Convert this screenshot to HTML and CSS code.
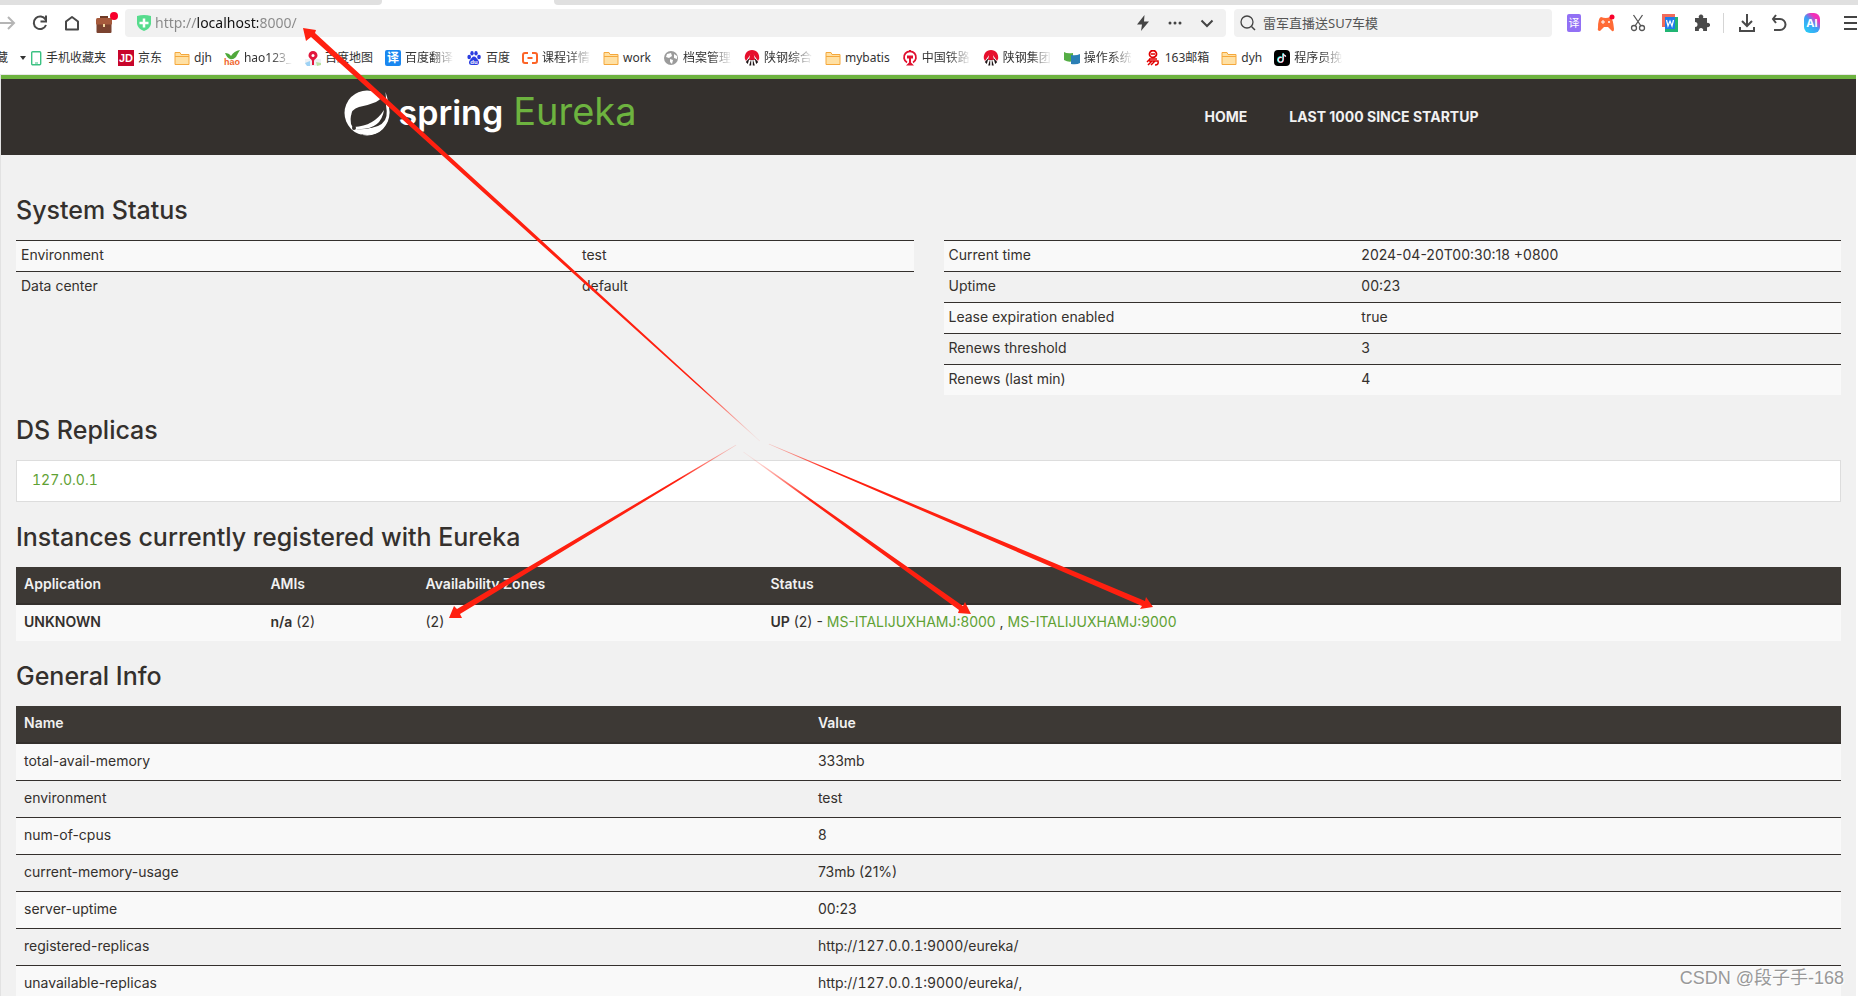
FILE: index.html
```html
<!DOCTYPE html>
<html lang="en">
<head>
<meta charset="utf-8">
<title>Eureka</title>
<link rel="stylesheet" href="styles.css">
</head>
<body>
<svg class="defs" aria-hidden="true">
  <symbol id="folder" viewBox="0 0 16 16"><path d="M1 2.500h5l1 2h8v10H1z" fill="#ffe0a3" stroke="#f5a83c"/><path d="M1 6.500h14" stroke="#f5a83c" fill="none"/></symbol>
  <symbol id="steel" viewBox="0 0 16 16"><path d="M8 0C3 0 .5 4 .8 8.500L2 11l4.500-6.500h3L14 11l1.200-2.500C15.500 4 13 0 8 0z" fill="#e60f2d"/><path d="M6.500 3h3l1.500 7H5z" fill="#e60f2d"/><path d="M5.500 8L1.800 12l2 2zM7.200 9l-2 6.500h2zM8.800 9l2 6.500h-2zM10.500 8l3.700 4-2 2z" fill="#1c1315"/></symbol>
</svg>
<div class="window">
  <div class="tabs"><div class="tab-left"></div><div class="tab-active"></div><div class="tab-right"></div></div>
  <div class="toolbar">
    <button class="tool forward" aria-label="Forward"><svg width="16" height="20" viewBox="0 0 16 20"><path d="M0 10h14M8 4l6 6-6 6" fill="none" stroke="#b5b5b5" stroke-width="2"/></svg></button>
    <button class="tool" aria-label="Reload"><svg width="16" height="16" viewBox="0 0 16 16"><path d="M13.500 4.500A6.300 6.300 0 1 0 14 10" fill="none" stroke="#484848" stroke-width="2"/><path d="M14 0.500v6H8.500" fill="none" stroke="#484848" stroke-width="2"/></svg></button>
    <button class="tool" aria-label="Home"><svg width="16" height="16" viewBox="0 0 16 16"><path d="M2 6.500L8 2l6 4.500V14.500H2z" fill="none" stroke="#484848" stroke-width="2" stroke-linejoin="round"/></svg></button>
    <button class="tool" aria-label="Briefcase"><svg width="22" height="22" viewBox="0 0 22 22"><path d="M5 7V5h6v2" fill="none" stroke="#6e3a26" stroke-width="2"/><rect x="0" y="6" width="16" height="7" rx="1.500" fill="#a65a3c"/><path d="M.5 12.500h15V20a1 1 0 0 1-1 1h-13a1 1 0 0 1-1-1z" fill="#7b4330"/><rect x="7" y="12" width="2" height="3" fill="#f3d9a0"/><circle cx="18" cy="4" r="4" fill="#f8002c"/></svg></button>
    <div class="address">
      <svg width="14" height="16" viewBox="0 0 14 16"><path d="M0 1q7-2 14 0v8q-1 5-7 7-6-2-7-7z" fill="#57dc8d"/><path d="M7 3.500v9M2.500 8h9" stroke="#fff" stroke-width="2.500"/></svg>
      <input class="url" aria-label="Address" value="http://localhost:8000/">
      <button class="tool" aria-label="Speed"><svg width="14" height="16" viewBox="0 0 14 16"><path d="M8.500 0L1 9.500h5L5 16l8-9.500H8z" fill="#444"/></svg></button>
      <button class="tool" aria-label="More"><svg width="14" height="16" viewBox="0 0 14 16"><g fill="#444"><circle cx="2" cy="8" r="1.500"/><circle cx="7" cy="8" r="1.500"/><circle cx="12" cy="8" r="1.500"/></g></svg></button>
      <button class="tool" aria-label="Expand"><svg width="14" height="16" viewBox="0 0 14 16"><path d="M1.500 5.500L7 11l5.500-5.500" fill="none" stroke="#444" stroke-width="2"/></svg></button>
    </div>
    <div class="search">
      <svg width="16" height="16" viewBox="0 0 16 16"><circle cx="7" cy="7" r="6" fill="none" stroke="#444" stroke-width="1.300"/><path d="M11.500 11.500l3.500 3.500" stroke="#444" stroke-width="1.500"/></svg>
      <input class="query" aria-label="Search" value="雷军直播送SU7车模">
    </div>
    <div class="extensions">
      <button class="tool ext" aria-label="Translate"><svg width="16" height="18" viewBox="0 0 16 18"><rect x="1" width="14" height="18" rx="2" fill="#9270f5"/><text x="8" y="13" class="glyph" font-size="11" text-anchor="middle" fill="#fff">译</text></svg></button>
      <button class="tool ext" aria-label="Games"><svg width="18" height="18" viewBox="0 0 18 18"><path d="M4 3q5 2 9 0 3 1 4 12 0 3-2 2l-4-4H7l-4 4q-3 0-2-3Q1 4 4 3z" fill="#ff6b36"/><path d="M4 8h4M6 6v4" stroke="#fff"/><circle cx="12" cy="8" r="1" fill="#fff"/><circle cx="15" cy="3" r="2.500" fill="#f8002c"/></svg></button>
      <button class="tool ext" aria-label="Screenshot"><svg width="16" height="18" viewBox="0 0 16 18"><g fill="none" stroke="#555" stroke-width="1.300"><path d="M3.500 1L11 12M12.500 1L5 12"/><circle cx="4" cy="14" r="2.500"/><circle cx="12" cy="14" r="2.500"/></g></svg></button>
      <button class="tool ext" aria-label="Documents"><svg width="18" height="20" viewBox="0 0 18 20"><path d="M1 1h13v13H1z" fill="#f26b5b"/><path d="M4 4h13v15H4z" fill="#21b573"/><path d="M4 4h10v12H4z" fill="#1f7bea"/><path d="M5.500 7l1.500 6 2-5 2 5 1.500-6" fill="none" stroke="#fff" stroke-width="1.200"/></svg></button>
      <button class="tool ext" aria-label="Extensions"><svg width="16" height="18" viewBox="0 0 16 18"><path d="M1 4h4a2.300 2.300 0 1 1 4 0h4v5a2.200 2.200 0 1 1 0 4v4H9a2.200 2.200 0 1 0-4 0H1v-4a2.200 2.200 0 1 0 0-5z" fill="#4a4a4a"/></svg></button>
      <span class="rule"></span>
      <button class="tool ext" aria-label="Downloads"><svg width="16" height="18" viewBox="0 0 16 18"><path d="M8 0v12M3 7l5 5 5-5M1 13v4h14v-4" fill="none" stroke="#4a4a4a" stroke-width="2"/></svg></button>
      <button class="tool ext" aria-label="Undo"><svg width="16" height="18" viewBox="0 0 16 18"><path d="M5 1L2 5l3 4M2 5h7a5.500 5.500 0 0 1 0 11H3" fill="none" stroke="#4a4a4a" stroke-width="2"/></svg></button>
      <button class="tool ai" aria-label="AI">AI</button>
      <button class="tool" aria-label="Menu"><svg width="13" height="16" viewBox="0 0 13 16"><path d="M0 2h13M0 8h13M0 14h13" stroke="#444" stroke-width="2"/></svg></button>
    </div>
  </div>
  <nav class="bookmarks" aria-label="Bookmarks">
    <a class="mark first" href="#">藏</a>
    <button class="tool" aria-label="Bookmark list"><svg width="6" height="4" viewBox="0 0 6 4"><path d="M0 0h6L3 4z" fill="#333"/></svg></button>
    <a class="mark phone" href="#"><svg width="11" height="16" viewBox="0 0 11 16"><rect x="0.700" y="1.700" width="9" height="13" rx="1" fill="#fff" stroke="#3cc283" stroke-width="1.400"/><path d="M4 13h3" stroke="#3cc283"/></svg><span>手机收藏夹</span></a>
    <a class="mark" href="#"><svg width="16" height="16" viewBox="0 0 16 16"><path d="M0 0h16v16H0z" fill="#c8052b"/><text x="8" y="12" class="glyph" font-size="11" font-weight="700" text-anchor="middle" fill="#fff">JD</text></svg><span>京东</span></a>
    <a class="mark" href="#"><svg width="16" height="16"><use href="#folder"/></svg><span>djh</span></a>
    <a class="mark" href="#"><svg width="16" height="16" viewBox="0 0 16 16"><path d="M1 3q4 0 6 3 3-5 9-6-2 3-4 7-3 3-6 2Q3 8 1 3z" fill="#4fa83a"/><text x="8" y="15" class="glyph" font-size="9" font-weight="700" text-anchor="middle" fill="#f0642c">hao</text></svg><span class="fade">hao123_</span></a>
    <a class="mark" href="#"><svg width="16" height="16" viewBox="0 0 16 16"><path d="M0 9h16v5l-5 2H3l-3-2z" fill="#eef2f5"/><path d="M0 13l5-2v5H2z" fill="#9ed2f5"/><path d="M11 12l5 1v2l-4 1z" fill="#b8e3a3"/><path d="M8 1a4.500 4.500 0 0 0-4.500 4.500C3.500 8 7 9.500 7 11v4h2v-4c0-1.500 3.500-3 3.500-5.500A4.500 4.500 0 0 0 8 1z" fill="#e2163c"/><circle cx="8" cy="5.500" r="1.500" fill="#fff"/></svg><span>百度地图</span></a>
    <a class="mark" href="#"><svg width="16" height="16" viewBox="0 0 16 16"><rect width="16" height="16" rx="2" fill="#1a87f0"/><text x="8" y="12" class="glyph" font-size="12" font-weight="700" text-anchor="middle" fill="#fff">译</text></svg><span class="fade">百度翻译</span></a>
    <a class="mark" href="#"><svg width="16" height="16" viewBox="0 0 16 16"><g fill="#2b3de0"><ellipse cx="3.200" cy="7" rx="1.800" ry="2.200"/><ellipse cx="6" cy="3.200" rx="1.700" ry="2.300"/><ellipse cx="10" cy="3.200" rx="1.700" ry="2.300"/><ellipse cx="13" cy="7" rx="1.800" ry="2.200"/><path d="M8 6.500c-2 0-2.500 2-4 3.500s-1.500 5 1.500 5h5c3 0 3-3.500 1.500-5S10 6.500 8 6.500z"/></g><text x="8" y="14" class="glyph" font-size="6" font-weight="700" text-anchor="middle" fill="#fff">du</text></svg><span>百度</span></a>
    <a class="mark" href="#"><svg width="16" height="16" viewBox="0 0 16 16"><path d="M6 3H3a2 2 0 0 0-2 2v6a2 2 0 0 0 2 2h3M10 3h3a2 2 0 0 1 2 2v6a2 2 0 0 1-2 2h-3M5.500 8h5" fill="none" stroke="#fc6427" stroke-width="2"/></svg><span class="fade">课程详情</span></a>
    <a class="mark" href="#"><svg width="16" height="16"><use href="#folder"/></svg><span>work</span></a>
    <a class="mark" href="#"><svg width="16" height="16" viewBox="0 0 16 16"><circle cx="8" cy="8" r="7" fill="#9b9b9b"/><path d="M4 4l4-1 1 3-3 2-3-1zM7 9l3 1-1 4-2-2zM11 4l3 2v3l-3-1z" fill="#fff"/></svg><span class="fade">档案管理</span></a>
    <a class="mark" href="#"><svg width="16" height="16"><use href="#steel"/></svg><span class="fade">陕钢综合</span></a>
    <a class="mark" href="#"><svg width="16" height="16"><use href="#folder"/></svg><span>mybatis</span></a>
    <a class="mark" href="#"><svg width="16" height="16" viewBox="0 0 16 16"><path d="M5 12.500a6 6 0 1 1 6 0" fill="none" stroke="#e0102f" stroke-width="1.800"/><path d="M5 5.500h6v3H9v4l3 3H4l3-3v-4H5zM7 0h2v2H7z" fill="#e0102f"/></svg><span class="fade">中国铁路</span></a>
    <a class="mark" href="#"><svg width="16" height="16"><use href="#steel"/></svg><span class="fade">陕钢集团</span></a>
    <a class="mark" href="#"><svg width="16" height="16" viewBox="0 0 16 16"><path d="M0 2q3 2 9 1v8q-4 2-9-1z" fill="#55ad45"/><path d="M7 5q5 1 9-1v9q-3 2-9 1z" fill="#2b7fb5"/></svg><span class="fade">操作系统</span></a>
    <a class="mark" href="#"><svg width="16" height="16" viewBox="0 0 16 16"><circle cx="8" cy="4" r="3.500" fill="none" stroke="#e10000" stroke-width="1.800"/><path d="M6 4h4M4 9h8M5 9l-3 3M4 11h9q1 4-3 4M7 11l-4 4M10 11l-4 4" fill="none" stroke="#e10000" stroke-width="1.500"/></svg><span>163邮箱</span></a>
    <a class="mark" href="#"><svg width="16" height="16"><use href="#folder"/></svg><span>dyh</span></a>
    <a class="mark" href="#"><svg width="16" height="16" viewBox="0 0 16 16"><rect width="16" height="16" rx="4" fill="#000"/><path d="M7.500 7.300a2.600 2.600 0 1 0 1.500 2.500V3.500q.7 2.400 3 2.600" fill="none" stroke="#25f4ee" stroke-width="1.600"/><path d="M8 7.800a2.400 2.400 0 1 0 1.600 2.300V4q.7 2.200 2.600 2.500" fill="none" stroke="#fe2c55" stroke-width="1"/><path d="M7.700 7.500a2.500 2.500 0 1 0 1.500 2.400V3.700q.8 2.300 2.800 2.600" fill="none" stroke="#fff"/></svg><span class="fade">程序员挽</span></a>
  </nav>

  <div class="page">
    <header class="banner">
      <div class="banner-inner">
        <a class="brand" href="#">
          <svg width="46" height="46" viewBox="0 0 46 46"><circle cx="23" cy="23" r="22.500" fill="#fff"/><path d="M42 1q6 15 2 24-1 8-7 14-7 6-19 6l-5-5q-5-6-6-13 0-8 8-10 10-2 17-5 7-4 10-11z" fill="#34302d"/><path d="M41.500 2q6 18 2.500 27-5 15-20 16-9 0-14-5l1-1q23 2 29-13 3-10 1.500-24z" fill="#fff"/><path d="M7 34Q5 24 12 20q4-3 15-4 10-2 13-9 5 17 1 23-6 10-26 8l-6 0z" fill="#34302d"/><path d="M10 37q20-1 30-17-3 21-29 19z" fill="#fff"/><circle cx="10" cy="38" r="2" fill="#34302d"/></svg>
          <span class="brand-text"><span class="brand-name">spring</span><span class="brand-product">Eureka</span></span>
        </a>
        <nav class="links"><a href="#">HOME</a><a href="#">LAST 1000 SINCE STARTUP</a></nav>
      </div>
    </header>
    <main class="content">
      <h1>System Status</h1>
      <div class="columns">
        <table class="compact status-left">
          <tr><td class="key">Environment</td><td>test</td></tr>
          <tr><td>Data center</td><td>default</td></tr>
        </table>
        <table class="compact status-right">
          <tr><td class="key">Current time</td><td>2024-04-20T00:30:18 +0800</td></tr>
          <tr><td>Uptime</td><td>00:23</td></tr>
          <tr><td>Lease expiration enabled</td><td>true</td></tr>
          <tr><td>Renews threshold</td><td>3</td></tr>
          <tr><td>Renews (last min)</td><td>4</td></tr>
        </table>
      </div>
      <h1>DS Replicas</h1>
      <div class="replicas"><a class="uri" href="#">127.0.0.1</a></div>
      <h1>Instances currently registered with Eureka</h1>
      <table class="grid instances">
        <thead><tr><th class="app">Application</th><th class="amis">AMIs</th><th class="zones">Availability Zones</th><th>Status</th></tr></thead>
        <tbody><tr><td><b>UNKNOWN</b></td><td><b>n/a</b> (2)</td><td>(2)</td><td><b>UP</b> (2) - <a href="#">MS-ITALIJUXHAMJ:8000</a> , <a href="#">MS-ITALIJUXHAMJ:9000</a></td></tr></tbody>
      </table>
      <h1>General Info</h1>
      <table class="grid">
        <thead><tr><th class="name">Name</th><th>Value</th></tr></thead>
        <tbody>
          <tr><td>total-avail-memory</td><td>333mb</td></tr>
          <tr><td>environment</td><td>test</td></tr>
          <tr><td>num-of-cpus</td><td>8</td></tr>
          <tr><td>current-memory-usage</td><td>73mb (21%)</td></tr>
          <tr><td>server-uptime</td><td>00:23</td></tr>
          <tr><td>registered-replicas</td><td class="uri">http://127.0.0.1:9000/eureka/</td></tr>
          <tr><td>unavailable-replicas</td><td class="uri">http://127.0.0.1:9000/eureka/,</td></tr>
        </tbody>
      </table>
    </main>
  </div>

  <svg class="arrows" width="1858" height="996" viewBox="0 0 1858 996" aria-hidden="true">
    <defs>
      <radialGradient id="fade" gradientUnits="userSpaceOnUse" cx="752" cy="446" r="80"><stop offset="0.050" stop-color="#ff2010" stop-opacity="0"/><stop offset="1" stop-color="#ff2010"/></radialGradient>
    </defs>
    <g fill="url(#fade)">
      <path d="M303 28L316 30 315 33 760 440.700 759.500 441.300 311 37 306 41z"/>
      <path d="M449 618L454 606 457 609 736 444.700 736.300 445.300 460 614 462 618z"/>
      <path d="M971 614L965 602 963 606 743.700 451.700 743.300 452.300 959 610 958 613z"/>
      <path d="M1153 607L1146 597 1145 601 769 443.700 768.700 444.300 1142 606 1140 609z"/>
    </g>
  </svg>
  <div class="watermark">CSDN @段子手-168</div>
</div>
</body>
</html>
```
FILE: styles.css
```css
* { box-sizing: border-box; }
body { margin: 0; background: #fff; font-family: Inter, "Noto Sans CJK SC", sans-serif; font-size: 14px; line-height: 20px; color: #34302d; }
a { text-decoration: none; color: inherit; }
.defs { position: absolute; width: 0; height: 0; }
.window { position: relative; height: 100vh; overflow: hidden; }

.tabs { display: flex; height: 5px; }
.tab-left { width: 382px; background: #e0e0e0; border-radius: 0 0 4px 0; }
.tab-active { width: 172px; }
.tab-right { flex: 1; background: #e0e0e0; border-radius: 0 0 0 4px; }

.toolbar { display: flex; align-items: center; height: 36px; font-family: "Noto Sans", "Noto Sans CJK SC", sans-serif; }
.tool { display: flex; align-items: center; justify-content: center; padding: 0; border: 0; background: none; }
.toolbar > .tool { margin-right: 16px; }
.toolbar > .tool:nth-child(4) { margin-right: 7px; }
.address, .search { display: flex; align-items: center; height: 28px; border-radius: 4px; background: #f1f1f1; }
.address { flex: 1; gap: 18px; padding: 0 12px; margin-right: 8px; }
.address > svg { margin-right: -14px; }
.search { width: 318px; padding: 0 6px; gap: 7px; }
input { flex: 1; min-width: 0; padding: 0; border: 0; outline: 0; background: none; font: inherit; }
.url { font-size: 14px; color: transparent; background: linear-gradient(to right, #888 42px, #111 42px, #111 103px, #888 103px); background-clip: text; -webkit-background-clip: text; }
.query { font-size: 13px; color: #555; }
.extensions { display: flex; align-items: center; width: 306px; padding-left: 11px; }
.ext { width: 22px; margin-right: 10px; }
.rule { width: 1px; height: 20px; margin-right: 12px; background: #d5d5d5; }
.ai { width: 16px; height: 20px; margin: 0 24px 0 4px; border-radius: 6px; background: linear-gradient(45deg, #26d4f5, #3e9cf5 50%, #f32fb8 75%); color: #fff; font: 700 11px Inter, sans-serif; }
.glyph { font-family: "Liberation Sans", "Noto Sans CJK SC", sans-serif; }

.bookmarks { display: flex; align-items: center; gap: 12px; height: 33px; font: 12px/16px "Noto Sans", "Noto Sans CJK SC", sans-serif; color: #333; white-space: nowrap; }
.mark { display: flex; align-items: center; gap: 4px; }
.first { width: 8px; justify-content: flex-end; }
.phone { margin-left: -7px; }
.fade { width: 49px; -webkit-mask-image: linear-gradient(to right, #000 55%, transparent); mask-image: linear-gradient(to right, #000 55%, transparent); }

.page { margin-right: 2px; border-left: 1px solid #e2e2e2; border-top: 1px solid #e8e8e8; background: #f1f1f1; }
.banner { height: 80px; border-top: 4px solid #6db33f; background: #34302d; }
.banner-inner { display: flex; justify-content: space-between; width: 1170px; margin: 0 auto; }
.brand { display: flex; align-items: center; height: 68px; }
.brand-text { display: flex; align-items: baseline; gap: 10px; padding: 0 0 2px 9px; line-height: 40px; }
.brand-name { font-size: 34px; font-weight: 600; color: #fff; }
.brand-product { font-size: 38px; font-weight: 400; color: #6db33f; }
.links { display: flex; gap: 42px; padding: 28px 35px 0 0; font-weight: 700; color: #f1f1f1; }

.content { padding: 20px 15px 0; }
h1 { margin: 0; padding: 22px 0 17px; font-size: 25px; line-height: 26px; font-weight: 500; }
.columns { display: flex; gap: 30px; align-items: flex-start; }
table { width: 100%; border-collapse: separate; border-spacing: 0; table-layout: fixed; }
th, td { padding: 7px 8px 9px; text-align: left; }
td { border-top: 1px solid #34302d; }
tr:nth-child(odd) td { background: #f9f9f9; }
b { font-weight: 600; }
.compact { flex: 1; }
.compact td { padding: 4px 5px 6px; }
.status-left .key { width: 62.5%; }
.status-right .key { width: 46%; }
.uri { font-variant-numeric: tabular-nums; }
.grid th { border-bottom: 2px solid #34302d; background: #3d3935; color: #f1f1f1; font-weight: 600; }
.grid tr:first-child td { border-top: 0; }
.app { width: 13.5%; }
.amis { width: 8.5%; }
.zones { width: 18.9%; }
.name { width: 43.5%; }
.replicas { padding: 9px 15px 11px; border: 1px solid #ddd; background: #fff; }
.replicas a, td a { color: #5fa134; }

.arrows { position: absolute; left: 0; top: 0; pointer-events: none; }
.watermark { position: absolute; right: 14px; bottom: 6px; font: 18px/24px "Liberation Sans", "Noto Sans CJK SC", sans-serif; color: #999; text-shadow: 1px 1px 0 #fff; }
```
